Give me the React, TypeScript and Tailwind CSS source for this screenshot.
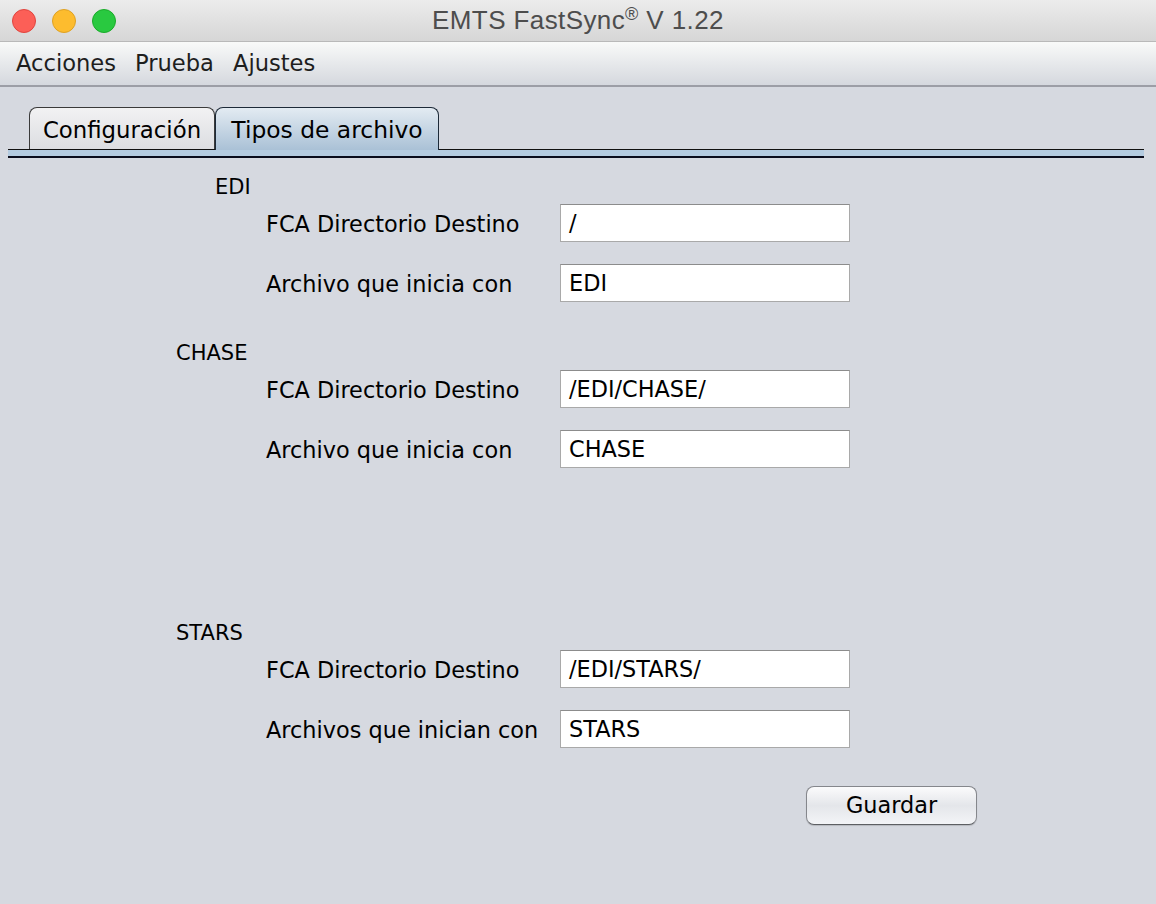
const FIELD_FONT = { fontFamily: '"DejaVu Sans", "Lucida Grande", Verdana, sans-serif' };

type Row = { label: string; value: string };
type Section = { title: string; indent: string; top: string; rows: Row[] };

const SECTIONS: Section[] = [
	{
		title: 'EDI',
		indent: 'pl-[215px]',
		top: 'mt-[17px]',
		rows: [
			{ label: 'FCA Directorio Destino', value: '/' },
			{ label: 'Archivo que inicia con', value: 'EDI' },
		],
	},
	{
		title: 'CHASE',
		indent: 'pl-[176px]',
		top: 'mt-[39px]',
		rows: [
			{ label: 'FCA Directorio Destino', value: '/EDI/CHASE/' },
			{ label: 'Archivo que inicia con', value: 'CHASE' },
		],
	},
	{
		title: 'STARS',
		indent: 'pl-[176px]',
		top: 'mt-[153px]',
		rows: [
			{ label: 'FCA Directorio Destino', value: '/EDI/STARS/' },
			{ label: 'Archivos que inician con', value: 'STARS' },
		],
	},
];

function TrafficLights() {
	return (
		<div className="flex items-center gap-[16px] pl-[12px]">
			<span className="w-[24px] h-[24px] rounded-full bg-[#fc5f57] border border-[#e0443e]" />
			<span className="w-[24px] h-[24px] rounded-full bg-[#fdbc2e] border border-[#dea123]" />
			<span className="w-[24px] h-[24px] rounded-full bg-[#29c940] border border-[#1aab29]" />
		</div>
	);
}

function FormRow({ label, value }: Row) {
	return (
		<div className="flex items-center h-[38px]">
			<span className="w-[294px] pl-[266px] pt-[3px] box-content whitespace-nowrap text-[22.4px] text-black">{label}</span>
			<div className="w-[290px] h-[38px] bg-white border border-[#a9a9a9] border-t-[#8c8c8c] flex items-center pl-[8px] pt-[2px] text-[22.4px] text-black">
				{value}
			</div>
		</div>
	);
}

export default function App() {
	return (
		<div className="w-[1156px] h-[904px] flex flex-col bg-[#d6d9e0] overflow-hidden" style={FIELD_FONT}>
			{/* title bar */}
			<div className="relative h-[42px] flex items-center bg-gradient-to-b from-[#ececec] to-[#d6d6d6] border-b border-[#b9b9b9]">
				<TrafficLights />
				<div
					className="absolute inset-x-0 top-0 h-[41px] flex items-center justify-center text-[26px] tracking-[0.4px] text-[#4d4d4d]"
					style={{ fontFamily: '"Liberation Sans", Arial, sans-serif' }}
				>
					EMTS FastSync<span className="text-[18px] -translate-y-[6px] inline-block">®</span>&nbsp;V 1.22
				</div>
			</div>

			{/* menu bar */}
			<div className="h-[45px] flex items-center gap-[19px] pl-[16px] bg-gradient-to-b from-[#f9faf9] to-[#d5d8de] border-b-2 border-[#9c9ea6] text-[22.6px] text-[#1e1e1e]">
				<span>Acciones</span>
				<span>Prueba</span>
				<span>Ajustes</span>
			</div>

			{/* tabs */}
			<div className="mt-[20px] mx-[8px] mr-[12px]">
				<div className="flex items-end pl-[21px] border-b border-[#111]">
					<div className="h-[42px] w-[186px] pt-[3px] flex items-center justify-center rounded-t-[8px] border border-b-0 border-[#3a3a3a] bg-gradient-to-b from-[#f2f2f3] to-[#dcdde1] text-[22.8px] text-black">
						Configuración
					</div>
					<div className="h-[43px] w-[224px] pt-[3px] -mb-px flex items-center justify-center rounded-t-[8px] border border-b-0 border-[#1d2a38] bg-gradient-to-b from-[#e3ebf2] to-[#aac1d6] text-[23.4px] text-black">
						Tipos de archivo
					</div>
				</div>
				<div className="h-[6px] bg-[#b4cbe0]" />
				<div className="h-[2px] bg-[#0a0c1c]" />
			</div>

			{/* form */}
			<div className="flex flex-col">
				{SECTIONS.map(section => (
					<div key={section.title} className={`flex flex-col ${section.top}`}>
						<div className={`${section.indent} h-[24px] leading-[24px] text-[21px] text-black`}>{section.title}</div>
						<div className="flex flex-col gap-[22px] mt-[5px]">
							{section.rows.map(row => (
								<FormRow key={row.label} label={row.label} value={row.value} />
							))}
						</div>
					</div>
				))}
				<div className="flex pl-[806px] mt-[38px]">
					<button className="w-[171px] h-[39px] pt-[1px] rounded-[8px] border border-[#85878c] border-b-[#5d5f63] bg-gradient-to-b from-[#fbfbfc] via-[#e4e6ea] to-[#f3f4f7] text-[22.4px] text-black shadow-[0_1px_1px_rgba(0,0,0,0.15)]">
						Guardar
					</button>
				</div>
			</div>
		</div>
	);
}
